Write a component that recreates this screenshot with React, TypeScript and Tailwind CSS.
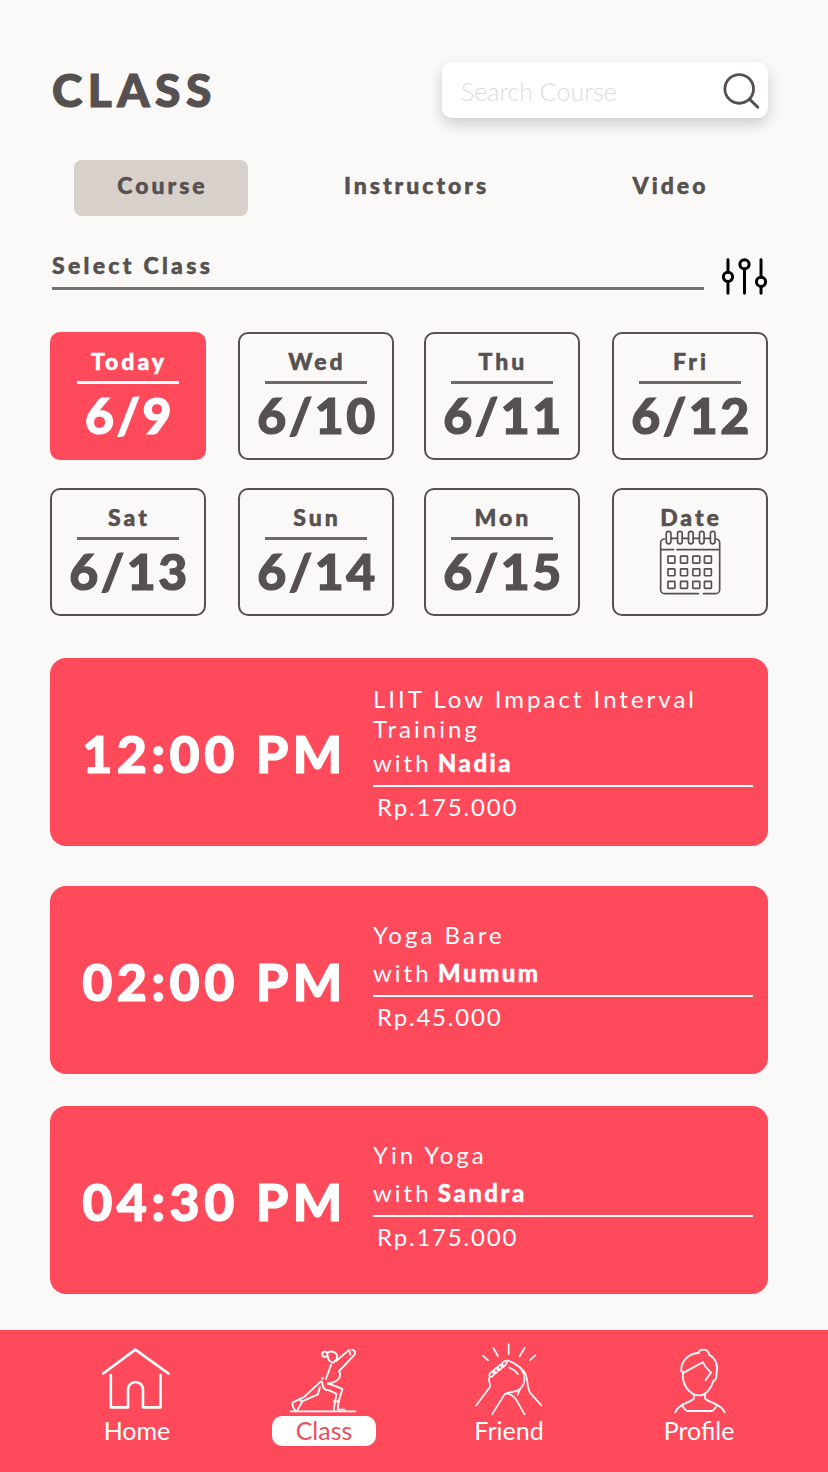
const days = [
  [{ l: "Today", n: "6/9", on: true, c: "" }, { l: "Wed", n: "6/10", c: "ml-[32px]" }, { l: "Thu", n: "6/11", c: "ml-[30px]" }, { l: "Fri", n: "6/12", c: "ml-[32px]" }],
  [{ l: "Sat", n: "6/13", c: "" }, { l: "Sun", n: "6/14", c: "ml-[32px]" }, { l: "Mon", n: "6/15", c: "ml-[30px]" }],
];

function Calendar() {
  const xs = [205, 243, 280, 315];
  const ys = [232, 270, 308];
  return (
    <svg viewBox="175 150 190 205" width="63" height="68" className="-mt-[2px] -ml-[2px]" fill="none" stroke="#565050" strokeWidth="5" strokeLinecap="round" strokeLinejoin="round">
      <path d="M297 345H195a12 12 0 0 1-12-12V192a12 12 0 0 1 12-12M350 180a12 12 0 0 1 11 12V333a12 12 0 0 1-12 12H312" />
      <path d="M184 212H222M232 212H360" />
      {[207, 241, 274, 307, 340].map((x) => (
        <rect key={x} x={x - 7} y="157" width="14" height="38" rx="7" />
      ))}
      <path d="M214 178H234M248 178H267M281 178H300M314 178H333" />
      {ys.map((y) => xs.map((x) => <rect key={`${x}-${y}`} x={x} y={y} width="21" height="21" rx="2" />))}
    </svg>
  );
}

function DayCard({ l, n, on, c }: { l: string; n: string; on?: boolean; c: string }) {
  return (
    <div className={`w-[156px] h-[128px] rounded-[10px] flex flex-col items-center pt-[13px] border-2 ${c} ${on ? "bg-[#FF4A5C] border-[#FF4A5C] text-white" : "border-[#565050] text-[#565050]"}`}>
      <div className="text-[23px] leading-[28px] pl-[2px] font-black tracking-[3px] [-webkit-text-stroke:0.5px_currentColor]">{l}</div>
      <div className={`w-[102px] h-[3px] mt-[6px] ${on ? "bg-white" : "bg-[#6e6a6a]"}`} />
      <div className="text-[50px] leading-[56px] pl-[3px] font-black tracking-[2.5px] mt-[3px] [-webkit-text-stroke:1.2px_currentColor]">{n}</div>
    </div>
  );
}

function ClassCard({ time, title, who, price, top, gap, mt }: { time: string; title: string[]; who: string; price: string; top: string; gap: string; mt: string }) {
  return (
    <div className={`h-[188px] rounded-[16px] bg-[#FF4A5C] text-white flex ${mt}`}>
      <div className="w-[323px] pt-[2px] pl-[6px] flex items-center justify-center text-[52px] font-black tracking-[4.5px] whitespace-nowrap [-webkit-text-stroke:1.2px_currentColor]">{time}</div>
      <div className={`flex-1 pr-[15px] ${top}`}>
        {title.map((t) => (
          <div key={t} className="text-[24px] leading-[30px] tracking-[3px] whitespace-nowrap">{t}</div>
        ))}
        <div className={`text-[24px] leading-[30px] tracking-[3px] ${gap}`}>
          with<span className="ml-[-2px] font-black tracking-[2.5px] [-webkit-text-stroke:0.4px_currentColor]"> {who}</span>
        </div>
        <div className="h-[2px] bg-white mt-[7px]" />
        <div className="text-[24px] leading-[30px] tracking-[1.8px] mt-[5px] pl-[4px]">{price}</div>
      </div>
    </div>
  );
}

function Home() {
  return (
    <svg viewBox="304 50 216 190" width="72" height="63" className="mt-[17px]" fill="none" stroke="white" strokeWidth="8" strokeLinecap="round" strokeLinejoin="round">
      <path d="M310 130L407 58L507 130" />
      <path d="M333 135V232H385V178a22.5 22.5 0 0 1 45 0V232H483V135" />
    </svg>
  );
}

function Yoga() {
  return (
    <svg viewBox="22 20 220 200" width="73" height="67" className="mt-[17px]" fill="none" stroke="white" strokeWidth="5.5" strokeLinecap="round" strokeLinejoin="round">
      <path d="M30 213H225" />
      <circle cx="133" cy="41" r="8" />
      <path d="M140 37C152 27 172 36 170 50C169 56 166 60 162 62" />
      <path d="M142 47C141 58 150 66 160 66" />
      <path d="M166 62L200 33L206 28L210 42" />
      <path d="M214 27C224 28 227 37 222 43L176 92" />
      <path d="M152 72L136 116" />
      <path d="M176 92C184 105 176 119 160 125L142 131" />
      <circle cx="126" cy="114" r="1.5" />
      <path d="M122 122L70 170L38 185C32 190 38 205 44 210" />
      <path d="M50 210L66 182L112 162L118 140" />
      <path d="M56 176L64 186" />
      <path d="M125 124C125 140 132 150 146 150L168 160L160 208" />
      <path d="M142 128C155 135 172 138 186 146L174 185L172 208H192" />
      <path d="M160 183H176" />
    </svg>
  );
}

function Friend() {
  const fingers = [[66, 103], [78, 93], [90, 83], [102, 73]];
  return (
    <svg viewBox="12 10 210 220" width="70" height="73" className="mt-[13px]" fill="none" stroke="white" strokeWidth="5" strokeLinecap="round" strokeLinejoin="round">
      <path d="M38 48L54 62M70 25L84 50M116 13V44M164 25L149 50M196 47L180 62" />
      {fingers.map(([x, y]) => (
        <ellipse key={x} cx={x} cy={y} rx="11" ry="5.5" transform={`rotate(-48 ${x} ${y})`} />
      ))}
      <path d="M18 198L60 142C64 132 52 126 58 114" />
      <path d="M112 62C122 66 144 72 156 92C168 112 166 136 148 150C134 160 116 156 104 164L66 225" />
      <path d="M138 76C156 84 170 100 172 124C174 146 176 156 184 164L215 198" />
      <path d="M104 164C118 160 132 170 138 180L164 225" />
      <path d="M150 150L143 166" />
      <path d="M118 84C128 88 138 96 144 104" />
    </svg>
  );
}

function Profile() {
  return (
    <svg viewBox="770 50 170 205" width="57" height="68" className="mt-[17px]" fill="none" stroke="white" strokeWidth="5.5" strokeLinecap="round" strokeLinejoin="round">
      <path d="M852 68C855 55 880 52 885 74" />
      <path d="M852 68C820 70 798 95 800 122C806 126 806 128 806 128L865 96C872 112 880 118 890 127L873 150" />
      <path d="M885 74C905 85 912 108 906 130C908 140 904 150 897 152C890 175 875 195 855 196C830 195 812 175 806 150C804 140 804 134 806 128" />
      <path d="M838 192V206C825 218 790 222 782 247" />
      <path d="M872 192V206C885 218 922 222 931 247" />
      <path d="M805 229C808 235 812 243 820 243H890C898 243 902 235 905 229" />
    </svg>
  );
}

export default function App() {
  return (
    <div className="w-[828px] h-[1472px] bg-[#FAF9F7] flex flex-col text-[#565050] overflow-hidden" style={{ fontFamily: "Lato, sans-serif" }}>
      <div className="pt-[62px] pl-[52px] pr-[60px] flex justify-between items-center">
        <div className="text-[46px] leading-[56px] font-black tracking-[5.5px] [-webkit-text-stroke:1.2px_currentColor]">CLASS</div>
        <div className="w-[326px] h-[56px] bg-white rounded-[10px] shadow-[0_6px_14px_rgba(0,0,0,0.18)] flex items-center justify-between pl-[19px] pr-[7px]">
          <span className="text-[25px] pt-[3px] font-light text-[#dedcdc]">Search Course</span>
          <svg viewBox="905 95 110 112" width="40" height="40" fill="none" stroke="#565050" strokeWidth="8" strokeLinecap="round">
            <circle cx="955" cy="148" r="40" />
            <path d="M985 178L1007 199" />
          </svg>
        </div>
      </div>

      <div className="flex mt-[42px] pl-[74px] text-[23px] font-black tracking-[3px] [-webkit-text-stroke:0.5px_currentColor]">
        <div className="w-[174px] h-[56px] pb-[6px] pl-[3px] rounded-[8px] bg-[#D8D1CA] flex items-center justify-center">Course</div>
        <div className="w-[334px] h-[56px] pb-[6px] pl-[3px] flex items-center justify-center">Instructors</div>
        <div className="w-[174px] h-[56px] pb-[6px] pl-[3px] flex items-center justify-center">Video</div>
      </div>

      <div className="flex justify-between pl-[52px] pr-[60px] mt-[34px] h-[45px]">
        <div className="w-[652px]">
          <div className="text-[23px] leading-[30px] font-black tracking-[3.3px] [-webkit-text-stroke:0.5px_currentColor]">Select Class</div>
          <div className="h-[3px] bg-[#757272] mt-[7px]" />
        </div>
        <svg viewBox="905 650 140 118" width="47" height="39" className="mt-[7px]" fill="none" stroke="black" strokeWidth="9" strokeLinecap="round">
          <path d="M925 658V696M925 724V760M975 686V760M1025 658V711M1025 739V760" />
          <circle cx="925" cy="710" r="14" />
          <circle cx="975" cy="672" r="14" />
          <circle cx="1025" cy="725" r="14" />
        </svg>
      </div>

      <div className="mt-[37px] pl-[50px] pr-[60px] flex flex-col gap-[28px]">
        <div className="flex">
          {days[0].map((d) => <DayCard key={d.l} {...d} />)}
        </div>
        <div className="flex">
          {days[1].map((d) => <DayCard key={d.l} {...d} />)}
          <div className="w-[156px] ml-[32px] h-[128px] rounded-[10px] border-2 border-[#565050] flex flex-col items-center pt-[13px]">
            <div className="text-[23px] leading-[28px] pl-[2px] font-black tracking-[3px] [-webkit-text-stroke:0.5px_currentColor]">Date</div>
            <Calendar />
          </div>
        </div>
      </div>

      <div className="pl-[50px] pr-[60px]">
        <ClassCard mt="mt-[42px]" time="12:00 PM" title={["LIIT Low Impact Interval", "Training"]} who="Nadia" price="Rp.175.000" top="pt-[26px]" gap="mt-[4px]" />
        <ClassCard mt="mt-[40px]" time="02:00 PM" title={["Yoga Bare"]} who="Mumum" price="Rp.45.000" top="pt-[34px]" gap="mt-[8px]" />
        <ClassCard mt="mt-[32px]" time="04:30 PM" title={["Yin Yoga"]} who="Sandra" price="Rp.175.000" top="pt-[34px]" gap="mt-[8px]" />
      </div>

      <div className="mt-[36px] h-[142px] bg-[#FF4A5C] flex pl-[43px] text-white text-[25px]">
        <div className="w-[188px] flex flex-col items-center">
          <div className="h-[85px]"><Home /></div>
          <div className="leading-[30px]">Home</div>
        </div>
        <div className="w-[186px] flex flex-col items-center">
          <div className="h-[86px]"><Yoga /></div>
          <div className="w-[104px] h-[30px] rounded-[10px] bg-white text-[#E9505F] text-center leading-[29px]">Class</div>
        </div>
        <div className="w-[184px] flex flex-col items-center">
          <div className="h-[85px]"><Friend /></div>
          <div className="leading-[30px]">Friend</div>
        </div>
        <div className="w-[196px] flex flex-col items-center">
          <div className="h-[85px]"><Profile /></div>
          <div className="leading-[30px]">Profile</div>
        </div>
      </div>
    </div>
  );
}
